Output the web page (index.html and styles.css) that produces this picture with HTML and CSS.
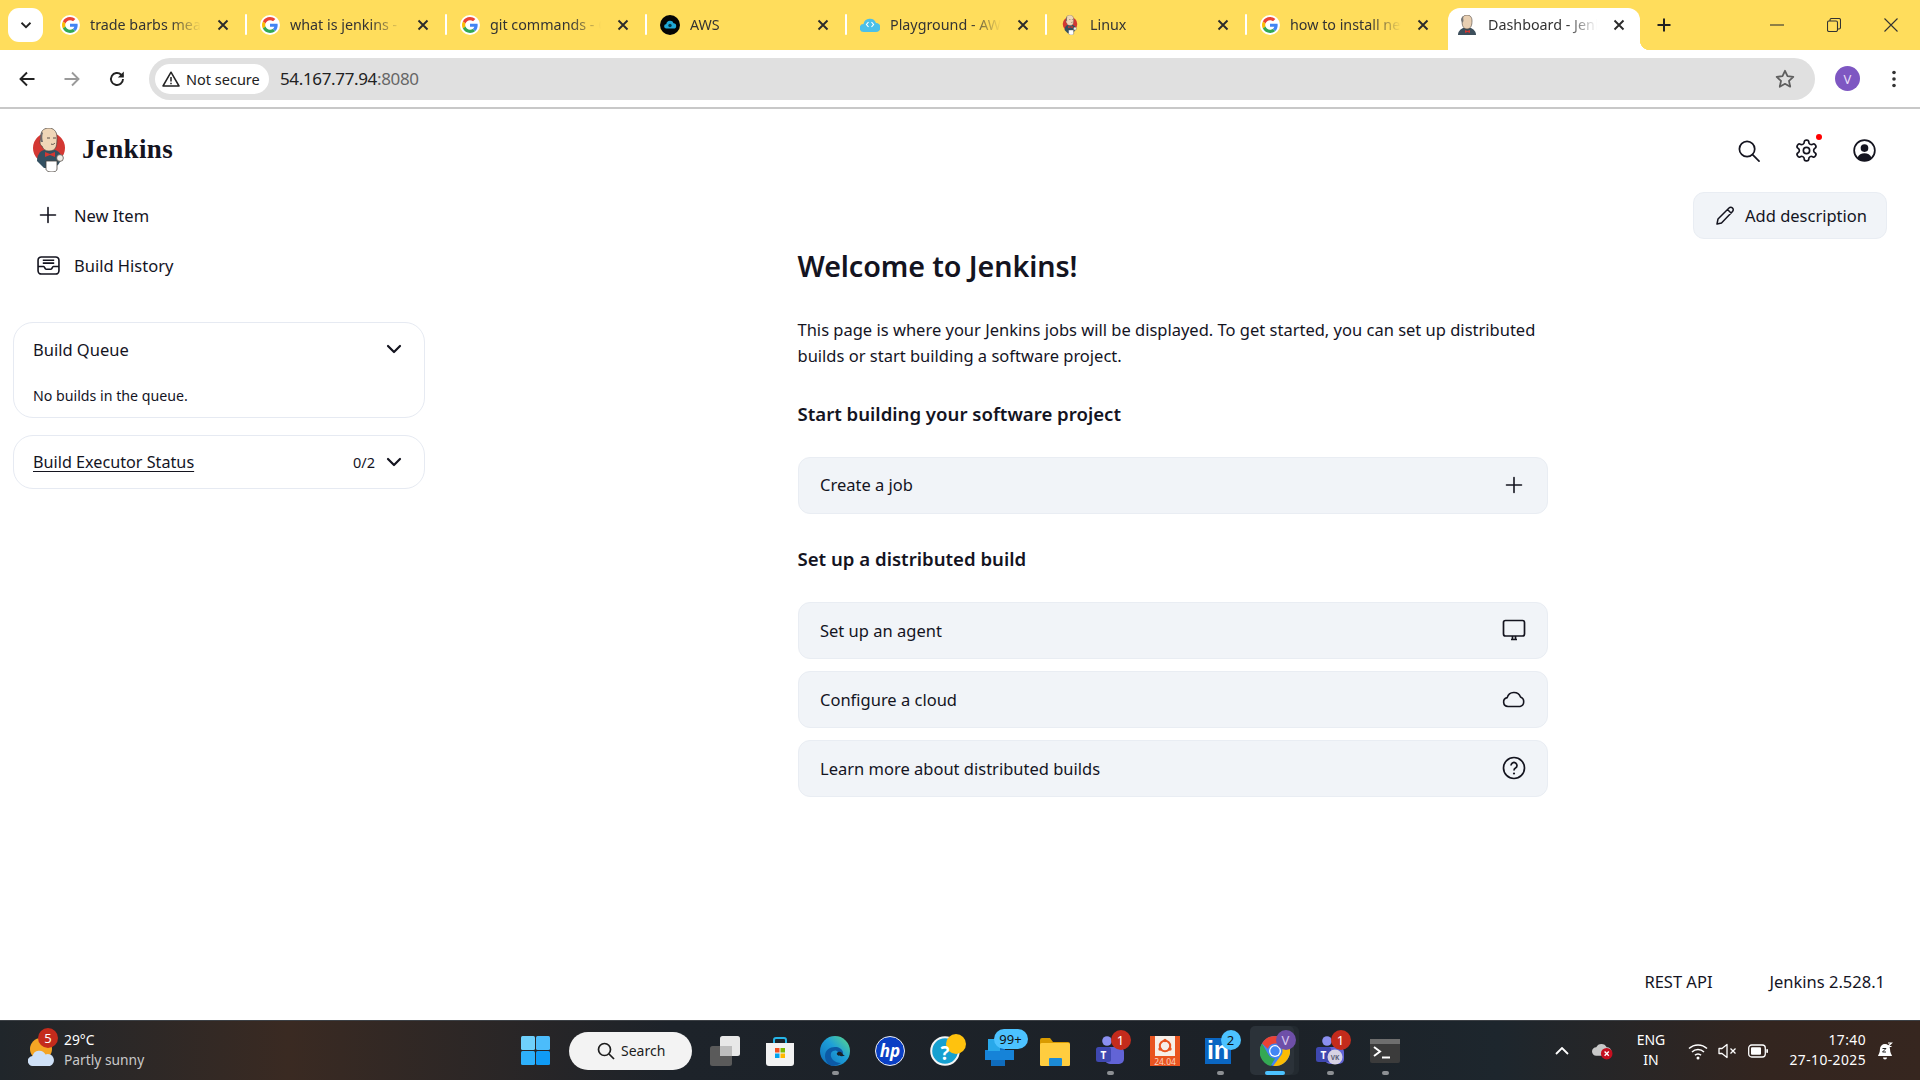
FILE: index.html
```html
<!DOCTYPE html>
<html lang="en">
<head>
<meta charset="utf-8">
<title>Dashboard - Jenkins</title>
<link rel="stylesheet" href="styles.css">
</head>
<body>
<svg class="defs" width="0" height="0" aria-hidden="true">
  <defs>
    <linearGradient id="edge" x1="0" y1="1" x2="1" y2="0">
      <stop offset="0" stop-color="#0f6cb8"/>
      <stop offset=".55" stop-color="#1e9fd8"/>
      <stop offset="1" stop-color="#5fdc85"/>
    </linearGradient>
  </defs>
  <symbol id="g" viewBox="-6 -6 60 60">
    <circle cx="24" cy="24" r="30" fill="#fff"/>
    <path fill="#EA4335" d="M24 9.5c3.54 0 6.71 1.22 9.21 3.6l6.85-6.85C35.9 2.38 30.47 0 24 0 14.62 0 6.51 5.38 2.56 13.22l7.98 6.19C12.43 13.72 17.74 9.5 24 9.5z"/>
    <path fill="#4285F4" d="M46.98 24.55c0-1.57-.15-3.09-.38-4.55H24v9.02h12.94c-.58 2.96-2.26 5.48-4.78 7.18l7.73 6c4.51-4.18 7.09-10.36 7.09-17.65z"/>
    <path fill="#FBBC05" d="M10.53 28.59c-.48-1.45-.76-2.99-.76-4.59s.27-3.14.76-4.59l-7.98-6.19C.92 16.46 0 20.12 0 24c0 3.88.92 7.54 2.56 10.78l7.97-6.19z"/>
    <path fill="#34A853" d="M24 48c6.48 0 11.93-2.13 15.89-5.81l-7.73-6c-2.15 1.45-4.92 2.3-8.16 2.3-6.26 0-11.57-4.22-13.47-9.91l-7.98 6.19C6.51 42.62 14.62 48 24 48z"/>
  </symbol>
  <symbol id="x" viewBox="0 0 12 12">
    <path d="M1.5 1.5l9 9M10.5 1.5l-9 9" stroke="#2b2b2b" stroke-width="1.9" fill="none"/>
  </symbol>
  <symbol id="butler" viewBox="0 0 32 44">
    <ellipse cx="16" cy="20" rx="16" ry="15.5" fill="#d33833"/>
    <path d="M4 33c0-6 3-10 7-11l11 0c4 1 6 4 7 9l-4 6-6 3H11z" fill="#335061"/>
    <path d="M8 7c0-5 4-7 8-7s8 3 8 9c0 3 0 7-1 10-1 3-4 4-7 4-4 0-6-2-7-5-1 0-2-2-2-4s1-3 1-3z" fill="#f0d6b7" stroke="#49423c" stroke-width=".7"/>
    <path d="M8 14c-1-3-1-8 1-10l1 1c-1 2-1 6 0 9z" fill="#6d6b6d"/>
    <path d="M14 10h3M20 10h3M18 16c2 1 3 0 4-1" stroke="#49423c" stroke-width=".9" fill="none"/>
    <path d="M12 24l5 2 5-2v5l-5-2-5 2z" fill="#d33833"/>
    <path d="M13 33h11v8c0 2-2 3-5 3s-6-1-6-3z" fill="#fff" stroke="#49423c" stroke-width=".8"/>
    <circle cx="27" cy="30" r="3.4" fill="#f0ece6" stroke="#49423c" stroke-width=".7"/>
  </symbol>
  <symbol id="chev" viewBox="0 0 16 10">
    <path d="M2 2l6 6 6-6" stroke="#14141f" stroke-width="2.2" fill="none" stroke-linecap="round" stroke-linejoin="round"/>
  </symbol>
  <symbol id="plus" viewBox="0 0 18 18">
    <path d="M9 1.5v15M1.5 9h15" stroke="#14141f" stroke-width="1.6" fill="none" stroke-linecap="round"/>
  </symbol>
  <symbol id="team" viewBox="0 0 28 30">
    <rect x="9" y="11" width="19" height="17" rx="5" fill="#6264d6"/>
    <circle cx="11" cy="5" r="4.800" fill="#8b90f0"/>
    <circle cx="22.500" cy="7" r="3.400" fill="#5f62cf"/>
    <rect x="0" y="11" width="15" height="15" rx="2.500" fill="#3f48b0"/>
    <text x="7.500" y="23" class="svg-t">T</text>
  </symbol>
</svg>

<header class="tabstrip">
  <button class="tabsearch"><svg class="ic-12" viewBox="0 0 16 10"><path d="M2 2l6 6 6-6" stroke="#222" stroke-width="2.4" fill="none"/></svg></button>
  <div class="tab"><svg class="fav"><use href="#g"/></svg><span class="tab-title">trade barbs meaning - Google Search</span><svg class="tab-x"><use href="#x"/></svg></div>
  <div class="tab"><svg class="fav"><use href="#g"/></svg><span class="tab-title">what is jenkins - Google Search</span><svg class="tab-x"><use href="#x"/></svg></div>
  <div class="tab"><svg class="fav"><use href="#g"/></svg><span class="tab-title">git commands - Google Search</span><svg class="tab-x"><use href="#x"/></svg></div>
  <div class="tab"><svg class="fav" viewBox="0 0 20 20"><circle cx="10" cy="10" r="10" fill="#050505"/><path d="M6.500 13.500a2.300 2.300 0 0 1-.2-4.600 3.800 3.800 0 0 1 7.300-.6 2.600 2.600 0 0 1 0 5.200z" fill="#1fa8d8"/><circle cx="10" cy="10.500" r="1.700" fill="#06384b"/></svg><span class="tab-title">AWS</span><svg class="tab-x"><use href="#x"/></svg></div>
  <div class="tab"><svg class="fav" viewBox="0 0 20 20"><path d="M4 17a4 4 0 0 1-.5-8 6.500 6.500 0 0 1 12.500-1 4.500 4.500 0 0 1 0 9z" fill="#4cc0e8"/><path d="M8.500 7l-2 2.500 2 2.500M11.500 7l2 2.500-2 2.500" stroke="#fff" stroke-width="1.200" fill="none"/></svg><span class="tab-title">Playground - AWS Skill Builder</span><svg class="tab-x"><use href="#x"/></svg></div>
  <div class="tab tab-linux"><svg class="fav"><use href="#butler"/></svg><span class="tab-title">Linux</span><svg class="tab-x"><use href="#x"/></svg></div>
  <div class="tab"><svg class="fav"><use href="#g"/></svg><span class="tab-title">how to install new jenkins</span><svg class="tab-x"><use href="#x"/></svg></div>
  <div class="tab tab-active"><svg class="fav fav-dash" viewBox="0 0 18 20"><path d="M0 20c0-4 3-6 5-7h8c2 1 5 3 5 7z" fill="#3d4f5c"/><path d="M4 6c0-4 2-6 5-6s5 2 5 6-1 8-5 8-5-4-5-8z" fill="#e8cfb2" stroke="#49423c" stroke-width=".6"/><path d="M3 5c0-2 1-3 2-4l.5 5-1 2z" fill="#777"/><path d="M7 15l2.500 1 2.500-1v3l-2.500-1-2.500 1z" fill="#d33833"/></svg><span class="tab-title">Dashboard - Jenkins</span><svg class="tab-x"><use href="#x"/></svg></div>
  <svg class="newtab" viewBox="0 0 14 14"><path d="M7 .5v13M.5 7h13" stroke="#222" stroke-width="2" fill="none"/></svg>
  <div class="winctl">
    <svg class="win-btn" viewBox="0 0 14 14"><path d="M0 7h14" stroke="#333" stroke-width="1.100"/></svg>
    <svg class="win-btn" viewBox="0 0 14 14"><rect x=".5" y="3" width="10" height="10.500" rx="1.500" fill="none" stroke="#333" stroke-width="1.100"/><path d="M3 3V2a1.500 1.500 0 0 1 1.500-1.500H12A1.500 1.500 0 0 1 13.500 2v7.500A1.500 1.500 0 0 1 12 11h-1.500" fill="none" stroke="#333" stroke-width="1.100"/></svg>
    <svg class="win-btn" viewBox="0 0 14 14"><path d="M.5.500l13 13M13.500.500l-13 13" stroke="#333" stroke-width="1.100"/></svg>
  </div>
</header>

<nav class="toolbar">
  <svg class="nav-ic" viewBox="0 0 18 18"><path d="M16.500 9H2.500M9 2.500L2.500 9 9 15.500" stroke="#222" stroke-width="1.900" fill="none"/></svg>
  <svg class="nav-ic" viewBox="0 0 18 18"><path d="M1.500 9h14M9 2.500L15.500 9 9 15.500" stroke="#9a9a9a" stroke-width="1.900" fill="none"/></svg>
  <svg class="nav-ic" viewBox="0 0 18 18"><path d="M15 9a6 6 0 1 1-1.800-4.300L15 6.500" stroke="#222" stroke-width="1.900" fill="none"/><path d="M15.800 1.500v6h-6z" fill="#222"/></svg>
  <div class="omnibox">
    <span class="chip"><svg class="warn" viewBox="0 0 18 16"><path d="M9 1.200L17 15H1z" fill="none" stroke="#222" stroke-width="1.500" stroke-linejoin="round"/><path d="M9 6v4.500M9 11.800v1.400" stroke="#222" stroke-width="1.500"/></svg>Not secure</span>
    <span class="url">54.167.77.94<span class="url-dim">:8080</span></span>
    <svg class="star" viewBox="0 0 20 20"><path d="M10 1.800l2.500 5.400 5.800.7-4.300 4 1.200 5.800L10 14.800l-5.200 2.900L6 11.900l-4.300-4 5.800-.7z" fill="none" stroke="#5f5f5f" stroke-width="1.800" stroke-linejoin="round"/></svg>
  </div>
  <span class="avatar">V</span>
  <svg class="kebab" viewBox="0 0 4 18"><circle cx="2" cy="2.500" r="1.800"/><circle cx="2" cy="9" r="1.800"/><circle cx="2" cy="15.500" r="1.800"/></svg>
</nav>

<div class="page">
  <div class="jk-header">
    <a class="brand"><svg class="logo"><use href="#butler"/></svg><span class="brand-name">Jenkins</span></a>
    <div class="jk-icons">
      <svg class="hd-ic" viewBox="0 0 24 24"><circle cx="10.500" cy="10.500" r="8" fill="none" stroke="#14141f" stroke-width="1.800"/><path d="M16.500 16.500L23 23" stroke="#14141f" stroke-width="1.800" stroke-linecap="round"/></svg>
      <span class="gear-wrap"><svg class="hd-ic" viewBox="1 1 22 22"><path d="M12.220 2h-.44a2 2 0 0 0-2 2v.18a2 2 0 0 1-1 1.730l-.43.250a2 2 0 0 1-2 0l-.15-.08a2 2 0 0 0-2.730.730l-.22.380a2 2 0 0 0 .730 2.730l.15.100a2 2 0 0 1 1 1.720v.510a2 2 0 0 1-1 1.740l-.15.090a2 2 0 0 0-.730 2.730l.22.380a2 2 0 0 0 2.730.730l.15-.08a2 2 0 0 1 2 0l.43.250a2 2 0 0 1 1 1.730V20a2 2 0 0 0 2 2h.44a2 2 0 0 0 2-2v-.18a2 2 0 0 1 1-1.730l.43-.25a2 2 0 0 1 2 0l.15.080a2 2 0 0 0 2.730-.730l.22-.39a2 2 0 0 0-.730-2.730l-.15-.08a2 2 0 0 1-1-1.740v-.5a2 2 0 0 1 1-1.740l.15-.09a2 2 0 0 0 .730-2.730l-.22-.38a2 2 0 0 0-2.730-.730l-.15.080a2 2 0 0 1-2 0l-.43-.25a2 2 0 0 1-1-1.730V4a2 2 0 0 0-2-2z" fill="none" stroke="#14141f" stroke-width="1.600" stroke-linejoin="round"/><circle cx="12" cy="12" r="3" fill="none" stroke="#14141f" stroke-width="1.600"/></svg><i class="red-dot"></i></span>
      <svg class="hd-ic" viewBox="0 0 24 24"><circle cx="12" cy="12" r="10.800" fill="none" stroke="#14141f" stroke-width="1.800"/><circle cx="12" cy="9.500" r="4" fill="#14141f"/><path d="M4.500 19.800c1.500-3.600 4.300-5 7.500-5s6 1.400 7.500 5A10.800 10.800 0 0 1 12 22.800a10.800 10.800 0 0 1-7.500-3z" fill="#14141f"/></svg>
    </div>
  </div>

  <div class="jk-body">
    <aside class="side">
      <a class="side-item"><span class="side-ic"><svg class="ic-18"><use href="#plus"/></svg></span>New Item</a>
      <a class="side-item"><span class="side-ic"><svg class="ic-hist" viewBox="0 0 24 20"><rect x="1" y="1" width="22" height="18" rx="3.500" fill="none" stroke="#14141f" stroke-width="1.700"/><path d="M1 11h6c1 0 1 3 2.500 3h5c1.500 0 1.500-3 2.500-3h6M6 4.500h12M6 7.500h12" fill="none" stroke="#14141f" stroke-width="1.700"/></svg></span>Build History</a>
      <section class="pane pane-queue">
        <div class="pane-head"><span>Build Queue</span><svg class="chev"><use href="#chev"/></svg></div>
        <p class="pane-text">No builds in the queue.</p>
      </section>
      <section class="pane pane-exec">
        <div class="pane-head"><a class="pane-link">Build Executor Status</a><span class="count">0/2</span><svg class="chev"><use href="#chev"/></svg></div>
      </section>
    </aside>

    <main class="welcome">
      <h1>Welcome to Jenkins!</h1>
      <p class="lead">This page is where your Jenkins jobs will be displayed. To get started, you can set up distributed builds or start building a software project.</p>
      <h2 class="h-first">Start building your software project</h2>
      <a class="action"><span>Create a job</span><svg class="ic-18"><use href="#plus"/></svg></a>
      <h2 class="h-second">Set up a distributed build</h2>
      <div class="actions">
        <a class="action"><span>Set up an agent</span><svg class="ic-24" viewBox="0 0 24 24"><rect x="1.500" y="2.500" width="21" height="15.500" rx="2" fill="none" stroke="#14141f" stroke-width="1.700"/><path d="M9 21.500h6M10.500 18v3.500M13.500 18v3.500" stroke="#14141f" stroke-width="1.700" fill="none"/></svg></a>
        <a class="action"><span>Configure a cloud</span><svg class="ic-24" viewBox="0 0 24 24"><path d="M6 19.500a4.500 4.500 0 0 1-.8-8.900 7 7 0 0 1 13.300-.6 5 5 0 0 1-.5 9.500z" fill="none" stroke="#14141f" stroke-width="1.600" stroke-linejoin="round"/></svg></a>
        <a class="action"><span>Learn more about distributed builds</span><svg class="ic-24" viewBox="0 0 24 24"><circle cx="12" cy="12" r="10.500" fill="none" stroke="#14141f" stroke-width="1.700"/><path d="M9 9.500a3 3 0 1 1 4.500 2.600c-1 .6-1.500 1.200-1.500 2.400" fill="none" stroke="#14141f" stroke-width="1.700"/><circle cx="12" cy="17.500" r="1.100" fill="#14141f"/></svg></a>
      </div>
    </main>

    <div class="top-actions">
      <a class="btn-desc"><svg class="ic-20" viewBox="0 0 20 20"><path d="M2 18l1-5L14 2c1-1 2.500-1 3.500 0s1 2.500 0 3.500L6.500 17z M12.500 3.500l4 4" fill="none" stroke="#14141f" stroke-width="1.500" stroke-linejoin="round"/></svg>Add description</a>
    </div>
  </div>

  <footer class="jk-footer"><a>REST API</a><a>Jenkins 2.528.1</a></footer>
</div>

<div class="taskbar">
  <div class="tb-left">
    <span class="weather">
      <svg class="w-ic" viewBox="0 0 28 28"><circle cx="13" cy="11" r="11" fill="#f5a524"/><path d="M5 28a5 5 0 0 1-.5-10 7 7 0 0 1 13-1.500A5.500 5.500 0 0 1 22 28z" fill="#cfe1f7"/></svg>
      <b class="badge b-weather">5</b>
    </span>
    <span class="w-text"><span>29°C</span><span class="w-sub">Partly sunny</span></span>
  </div>
  <div class="tb-center">
    <svg class="winlogo" viewBox="0 0 29 29"><rect width="14" height="14" rx="1.500" fill="#6fd0fb"/><rect x="15" width="14" height="14" rx="1.500" fill="#4cbcfb"/><rect y="15" width="14" height="14" rx="1.500" fill="#2eb0fa"/><rect x="15" y="15" width="14" height="14" rx="1.500" fill="#0f9bf5"/></svg>
    <span class="tb-search"><svg class="ic-18" viewBox="0 0 18 18"><circle cx="7.500" cy="7.500" r="6" fill="none" stroke="#1c1c1c" stroke-width="1.700"/><path d="M12 12l5 5" stroke="#1c1c1c" stroke-width="1.700"/></svg>Search</span>
    <span class="tb-app"><svg class="app" viewBox="0 0 30 30"><rect x="10" width="20" height="20" rx="2.500" fill="#e8e8e8"/><rect y="10" width="22" height="20" rx="2.500" fill="#5a5a5a" /><rect x="10" y="10" width="12" height="10" fill="#bdbdbd"/></svg></span>
    <span class="tb-app"><svg class="app" viewBox="0 0 30 30"><path d="M9 7V4a2 2 0 0 1 2-2h8a2 2 0 0 1 2 2v3" fill="none" stroke="#26b5e8" stroke-width="2"/><path d="M1 7h28v20a3 3 0 0 1-3 3H4a3 3 0 0 1-3-3z" fill="#f2f2f2"/><rect x="10" y="12" width="4.500" height="4.500" fill="#f25022"/><rect x="15.500" y="12" width="4.500" height="4.500" fill="#7fba00"/><rect x="10" y="17.500" width="4.500" height="4.500" fill="#00a4ef"/><rect x="15.500" y="17.500" width="4.500" height="4.500" fill="#ffb900"/></svg></span>
    <span class="tb-app"><svg class="app" viewBox="0 0 30 30"><circle cx="15" cy="15" r="15" fill="url(#edge)"/><path d="M5 20c0-6 5-9 10-9 4 0 7 2 8 5 .6 2-1 3-3 3-1 0-1-1-2-3-1-1.500-3-2-5-1-3 1.500-3 6 0 9 2 2 5 3 8 3-3 2-6 3-9 3-4-1-7-5-7-10z" fill="#0c5aa6"/><path d="M17 17a3 3 0 0 1 5 0c1 1.500 1.500 2.500 3 2.500-2 1-6 1-7.500-.5-.8-.6-.8-1.200-.5-2z" fill="#1c2127"/></svg><i class="dot"></i></span>
    <span class="tb-app"><span class="hp">hp</span></span>
    <span class="tb-app"><svg class="app app-help" viewBox="0 0 36 32"><circle cx="15" cy="17" r="13.800" fill="#15a0d0" stroke="#f4f4f4" stroke-width="2"/><circle cx="26" cy="10" r="10" fill="#ffc20e"/><text x="15" y="26" class="svg-q">?</text></svg></span>
    <span class="tb-app"><svg class="app" viewBox="0 0 30 30"><rect x="6" y="8" width="14" height="22" fill="#0f6cbd"/><rect x="0" y="14" width="29" height="10" fill="#1683d8"/><rect x="3" y="3" width="12" height="12" fill="#28a8ea"/></svg><b class="badge b-blue b-wide">99+</b></span>
    <span class="tb-app"><svg class="app" viewBox="0 0 30 30"><path d="M0 4a2 2 0 0 1 2-2h8l3 4h15a2 2 0 0 1 2 2v4H0z" fill="#d99b00"/><rect y="7" width="30" height="23" rx="1.500" fill="#ffcd3f"/><rect x="9" y="22" width="13" height="8" rx="1" fill="#1c8bd6"/></svg></span>
    <span class="tb-app"><svg class="app" viewBox="0 0 28 30"><use href="#team" width="28" height="30"/></svg><b class="badge b-red">1</b><i class="dot"></i></span>
    <span class="tb-app"><svg class="app" viewBox="0 0 30 30"><rect width="30" height="30" fill="#e95420"/><rect x="5" width="20" height="20" fill="#f6efe9"/><circle cx="15" cy="10" r="5.200" fill="none" stroke="#e95420" stroke-width="2"/><circle cx="15" cy="4.500" r="1.700" fill="#e95420"/><circle cx="10" cy="13" r="1.700" fill="#e95420"/><circle cx="20" cy="13" r="1.700" fill="#e95420"/><text x="15" y="28.500" class="svg-u">24.04</text></svg></span>
    <span class="tb-app"><span class="linkedin">in</span><b class="badge b-blue">2</b><i class="dot"></i></span>
    <span class="tb-app tb-active"><svg class="app" viewBox="0 0 48 48"><circle cx="24" cy="24" r="24" fill="#4285f4"/><path d="M24 0a24 24 0 0 1 20.800 12H24a12 12 0 0 0-11.500 8.500L3.200 12A24 24 0 0 1 24 0z" fill="#ea4335"/><path d="M3.200 12L13.600 30A12 12 0 0 0 24 36l-7 12A24 24 0 0 1 3.200 12z" fill="#34a853"/><path d="M44.800 12A24 24 0 0 1 21 47.800L34.400 30A12 12 0 0 0 34.400 18z" fill="#fbbc05"/><circle cx="24" cy="24" r="9.500" fill="#fff"/><circle cx="24" cy="24" r="7.500" fill="#4285f4"/></svg><b class="badge b-purple">V</b><i class="bar"></i></span>
    <span class="tb-app"><svg class="app" viewBox="0 0 28 30"><use href="#team" width="28" height="30"/><circle cx="19" cy="21" r="7.500" fill="#d6d2e4"/><text x="19" y="23.500" class="svg-vk">VK</text></svg><b class="badge b-red">1</b><i class="dot"></i></span>
    <span class="tb-app"><svg class="app" viewBox="0 0 30 30"><rect y="3" width="30" height="24" rx="2" fill="#3b3b3b"/><rect y="3" width="30" height="5" fill="#6e6e6e"/><path d="M4 11l6 4.500-6 4.500" stroke="#fff" stroke-width="2" fill="none"/><path d="M12 21.500h8" stroke="#fff" stroke-width="2"/></svg><i class="dot"></i></span>
  </div>
  <div class="tb-tray">
    <svg class="t-chev" viewBox="0 0 14 8"><path d="M1 7l6-6 6 6" stroke="#fff" stroke-width="1.800" fill="none"/></svg>
    <svg class="t-cloud" viewBox="0 0 20 18"><path d="M4 14a4 4 0 0 1 0-8 5.500 5.500 0 0 1 10 0 4 4 0 0 1 1 8z" fill="#c8c8c8"/><circle cx="14" cy="12" r="5.500" fill="#c50f1f"/><path d="M12 10l4 4M16 10l-4 4" stroke="#fff" stroke-width="1.300"/></svg>
    <span class="t-lang"><span>ENG</span><span>IN</span></span>
    <svg class="t-wifi" viewBox="0 0 20 18"><path d="M1 6.500a13 13 0 0 1 18 0M4 10a8.500 8.500 0 0 1 12 0M7 13.300a4 4 0 0 1 6 0" fill="none" stroke="#fff" stroke-width="1.500"/><circle cx="10" cy="16" r="1.500" fill="#fff"/></svg>
    <svg class="t-vol" viewBox="0 0 19 18"><path d="M1 6.500h3L9 2.500v13l-5-4H1z" fill="none" stroke="#fff" stroke-width="1.300" stroke-linejoin="round"/><path d="M12.500 6.500l5 5M17.500 6.500l-5 5" stroke="#fff" stroke-width="1.300"/></svg>
    <svg class="t-bat" viewBox="0 0 20 14"><rect x=".7" y="1" width="16.600" height="12" rx="3" fill="none" stroke="#fff" stroke-width="1.300"/><rect x="3" y="3.200" width="10" height="7.600" rx="1" fill="#fff"/><rect x="18.300" y="5" width="1.700" height="4" rx=".8" fill="#fff"/></svg>
    <span class="t-clock"><span>17:40</span><span>27-10-2025</span></span>
    <svg class="t-bell" viewBox="0 0 16 18"><path d="M8 2a5 5 0 0 1 5 5c0 4 2 6 2 7H1c0-1 2-3 2-7a5 5 0 0 1 5-5z" fill="#fff"/><path d="M6 15.500a2 2 0 0 0 4 0z" fill="#fff"/><path d="M5.500 6.500h3.500L5.500 10H9" stroke="#222" stroke-width="1" fill="none"/><path d="M11 1h3.500L11 4.500h3.500" stroke="#fff" stroke-width="1.200" fill="none"/></svg>
  </div>
</div>
</body>
</html>
```

FILE: styles.css
```css
* { box-sizing: border-box; }
html, body { margin: 0; height: 100%; }
body {
  width: 1920px;
  height: 1080px;
  overflow: hidden;
  display: flex;
  flex-direction: column;
  background: #fff;
  color: #14141f;
  font-family: "Noto Sans", "Open Sans", sans-serif;
  font-size: 16.5px;
}
.defs { position: absolute; }
a { color: inherit; text-decoration: none; }
svg { display: block; flex: none; }
.svg-t { font: 700 10px "Noto Sans", sans-serif; fill: #fff; text-anchor: middle; }
.svg-q { font: 700 19px "Noto Sans", sans-serif; fill: #fff; text-anchor: middle; }
.svg-u { font: 400 8.500px "Noto Sans", sans-serif; fill: #fbd3c1; text-anchor: middle; }
.svg-vk { font: 700 6.500px "Noto Sans", sans-serif; fill: #5b5f78; text-anchor: middle; }

/* tab strip */
.tabstrip {
  height: 50px;
  flex: none;
  display: flex;
  align-items: flex-start;
  background: #ffdd5c;
  padding-left: 8px;
}
.tabsearch {
  width: 35px;
  height: 34px;
  margin: 8px 3px 0 0;
  padding: 0;
  border: 0;
  border-radius: 11px;
  background: #fff;
  display: flex;
  align-items: center;
  justify-content: center;
}
.ic-12 { width: 12px; height: 8px; }
.tab {
  width: 200px;
  height: 42px;
  margin-top: 8px;
  padding: 0 17px 9px 14px;
  display: flex;
  align-items: center;
  position: relative;
  font-size: 14.3px;
  color: #333;
}
.tab::before {
  content: "";
  position: absolute;
  left: -1px;
  top: 6px;
  width: 2px;
  height: 21px;
  border-radius: 1px;
  background: #fff;
}
.tabsearch + .tab::before { display: none; }
.fav { width: 20px; height: 20px; margin-right: 10px; }
.tab-title {
  flex: 1;
  min-width: 0;
  white-space: nowrap;
  overflow: hidden;
  -webkit-mask-image: linear-gradient(90deg, #000 72%, transparent 100%);
  mask-image: linear-gradient(90deg, #000 72%, transparent 100%);
}
.tab-x { width: 12px; height: 12px; margin-left: 16px; }
.tab-active {
  width: 192px;
  margin-left: 2px;
  padding-left: 10px;
  padding-right: 15px;
  background: #fff;
  border-radius: 12px 12px 0 0;
}
.tab-active::before { display: none; }
.tab-active::after {
  content: "";
  position: absolute;
  right: -10px;
  bottom: 0;
  width: 10px;
  height: 10px;
  background: radial-gradient(circle at 100% 0, transparent 10px, #fff 10.500px);
}
.fav-dash { width: 18px; margin-right: 12px; }
.newtab { width: 14px; height: 14px; margin: 18px 0 0 17px; }
.winctl { margin-left: auto; display: flex; gap: 43px; padding: 18px 22px 0 0; }
.win-btn { width: 14px; height: 14px; }

/* toolbar */
.toolbar {
  height: 59px;
  flex: none;
  display: flex;
  align-items: center;
  background: #fff;
  border-bottom: 2px solid #c8c8c8;
  border-radius: 8px 8px 0 0;
  padding: 0 0 0 18px;
  position: relative;
}
.nav-ic { width: 18px; height: 18px; margin-right: 27px; }
.nav-ic + .omnibox { margin-left: -4px; }
.omnibox {
  width: 1666px;
  height: 42px;
  border-radius: 21px;
  background: #e0e0e0;
  display: flex;
  align-items: center;
  padding-left: 6px;
  font-size: 17px;
}
.chip {
  height: 30px;
  width: 114px;
  border-radius: 15px;
  background: #fff;
  display: flex;
  align-items: center;
  gap: 6px;
  padding-left: 7px;
  font-size: 14.500px;
  color: #222;
  white-space: nowrap;
}
.warn { width: 18px; height: 16px; }
.url { margin-left: 11px; color: #222; letter-spacing: -.35px; }
.url-dim { color: #666; }
.star { width: 20px; height: 20px; margin-left: auto; margin-right: 20px; }
.avatar {
  width: 25px;
  height: 25px;
  margin-left: 20px;
  border-radius: 50%;
  background: #7e57c2;
  color: #e8def8;
  font-size: 13px;
  display: flex;
  align-items: center;
  justify-content: center;
}
.kebab { width: 4px; height: 18px; margin-left: 32px; fill: #333; }

/* page */
.page { flex: 1; min-height: 0; display: flex; flex-direction: column; }
.jk-header {
  height: 82px;
  flex: none;
  display: flex;
  align-items: center;
  padding: 0 44px 0 33px;
}
.brand { display: flex; align-items: center; gap: 17px; }
.logo { width: 32px; height: 44px; }
.brand-name {
  font: 700 27px "Liberation Serif", serif;
  letter-spacing: .35px;
  color: #14141f;
  margin-bottom: 2px;
}
.jk-icons { margin-left: auto; display: flex; gap: 35px; align-items: center; }
.hd-ic { width: 23px; height: 23px; }
.gear-wrap { position: relative; display: block; }
.red-dot {
  position: absolute;
  right: -4px;
  top: -5px;
  width: 6px;
  height: 6px;
  border-radius: 50%;
  background: #f00;
}
.jk-body { flex: 1; min-height: 0; display: flex; align-items: flex-start; }

/* sidebar */
.side { width: 412px; margin-left: 13px; flex: none; }
.side-item {
  height: 50px;
  display: flex;
  align-items: center;
  padding-bottom: 2px;
  color: #14141f;
}
.side-ic {
  width: 61px;
  padding-left: 24px;
  display: flex;
}
.ic-18 { width: 18px; height: 18px; }
.ic-hist { width: 23px; height: 19px; }
.side-ic .ic-18 { margin-left: 2px; }
.pane {
  border: 1.500px solid #e6eaf2;
  border-radius: 20px;
  padding: 0 20px 0 19px;
}
.pane-queue { height: 96px; margin-top: 31px; }
.pane-exec { height: 54px; margin-top: 17px; }
.pane-head { display: flex; align-items: center; height: 52px; }
.pane-head > span:first-child, .pane-link { flex: 1; }
.pane-link { text-decoration: underline; text-underline-offset: 3px; text-decoration-thickness: 1px; font-size: 16.200px; }
.count { font-size: 14.500px; margin-left: 1px; margin-right: 11px; }
.chev { width: 16px; height: 10px; margin-right: 2px; }
.pane-text { margin: 10px 0 0; font-size: 14.200px; line-height: 22px; }

/* main */
.welcome { width: 750px; margin-left: 373px; flex: none; padding-top: 55px; }
h1 { margin: 0 0 0 -.5px; font-size: 28.700px; line-height: 40px; font-weight: 600; color: #14141f; letter-spacing: -.1px; }
.lead { margin: 31px 0 0 -.5px; line-height: 26px; }
h2 { margin: 0 0 0 -.5px; font-size: 18.600px; line-height: 26px; font-weight: 600; }
.h-first { margin-top: 32px; }
.h-second { margin-top: 32.500px; }
.action {
  height: 56.500px;
  margin-top: 30px;
  padding: 0 24px 1px 21px;
  display: flex;
  align-items: center;
  justify-content: space-between;
  background: #f1f4f8;
  border: 1px solid #e9edf3;
  border-radius: 12px;
}
.actions { margin-top: 30px; display: flex; flex-direction: column; gap: 12.500px; }
.actions .action { margin-top: 0; padding-bottom: 0; }
.ic-24 { width: 24px; height: 24px; margin-right: -3px; }
.action .ic-18 { margin-right: 0; }
.top-actions { margin-left: auto; padding: 1px 33px 0 0; }
.btn-desc {
  width: 194px;
  height: 47px;
  display: flex;
  align-items: center;
  gap: 10px;
  padding-left: 21px;
  background: #f1f4f8;
  border: 1px solid #e9edf3;
  border-radius: 11px;
  white-space: nowrap;
}
.ic-20 { width: 20px; height: 20px; }
.jk-footer {
  flex: none;
  display: flex;
  justify-content: flex-end;
  gap: 57px;
  padding: 0 35px 26px 0;
  line-height: 24px;
  font-size: 16.500px;
}

/* taskbar */
.taskbar {
  height: 60px;
  flex: none;
  display: flex;
  align-items: center;
  color: #fff;
  font-size: 14px;
  border-top: 1px solid #3c4045;
  background: linear-gradient(90deg, #20262b 0, #3a2a22 15%, #1d232a 35%, #1c2127 65%, #1d262d 78%, #33251f 92%, #36261f 100%);
}
.tb-left { width: 521px; flex: none; display: flex; align-items: center; padding-left: 28px; }
.weather { position: relative; width: 28px; height: 28px; margin-right: 8px; margin-top: 2px; }
.w-ic { width: 28px; height: 28px; }
.w-text { display: flex; flex-direction: column; line-height: 20px; font-size: 13.800px; margin-bottom: 2px; }
.w-sub { color: #c9c9c9; }
.badge {
  position: absolute;
  min-width: 20px;
  height: 20px;
  border-radius: 10px;
  display: flex;
  align-items: center;
  justify-content: center;
  color: #fff;
  font-size: 13px;
  font-weight: 400;
}
.b-weather { background: #c42b1c; right: -2px; top: -10px; }
.b-red { background: #c42b1c; }
.b-blue { background: #4cc2ff; color: #111; }
.b-wide { width: 34px; }
.b-purple { background: #6e4fa8; color: #d8c8f0; }
.tb-center { display: flex; align-items: center; flex: none; }
.winlogo { width: 29px; height: 29px; margin-right: 19px; }
.tb-search {
  width: 123px;
  height: 38px;
  margin-right: 5.500px;
  border-radius: 19px;
  background: #f3f3f3;
  color: #1c1c1c;
  display: flex;
  align-items: center;
  gap: 6px;
  padding-left: 28px;
  font-size: 14px;
}
.tb-app {
  width: 55px;
  height: 60px;
  display: flex;
  align-items: center;
  justify-content: center;
  position: relative;
}
.app { width: 30px; height: 30px; }
.app-help { width: 36px; height: 32px; margin-left: 6px; margin-top: -2px; }
.tb-app .badge { right: 7px; top: 9px; }
.tb-app .b-wide { right: 0; top: 8px; border-radius: 11px; }
.dot {
  position: absolute;
  left: 24px;
  bottom: 6px;
  width: 7px;
  height: 4px;
  border-radius: 2px;
  background: #8d9094;
}
.bar {
  position: absolute;
  left: 17.500px;
  bottom: 6px;
  width: 20px;
  height: 4px;
  border-radius: 2px;
  background: #4cc2ff;
}
.tb-active::before {
  content: "";
  position: absolute;
  left: 2.500px;
  top: 5px;
  width: 44px;
  height: 49px;
  border-radius: 5px;
  background: #2b3239;
  box-shadow: 5px 0 0 #232a30;
}
.tb-active .app, .tb-active .badge, .tb-active .bar { z-index: 1; }
.hp {
  width: 30px;
  height: 30px;
  border-radius: 50%;
  background: #0a3fc4;
  border: 1.500px solid #f1f1f1;
  color: #fff;
  display: flex;
  align-items: center;
  justify-content: center;
  font-size: 17px;
  font-style: italic;
  font-weight: 700;
}
.linkedin {
  width: 26px;
  height: 26px;
  margin-left: -4px;
  background: #0a66c2;
  color: #fff;
  display: flex;
  align-items: center;
  justify-content: center;
  font-size: 25px;
  line-height: 1;
  font-weight: 700;
  font-family: "Liberation Sans", sans-serif;
}
.tb-tray { margin-left: auto; display: flex; align-items: center; padding-right: 27px; flex: none; }
.t-chev { width: 14px; height: 8px; }
.t-cloud { width: 21px; height: 19px; margin-left: 23px; }
.t-lang { width: 36px; margin-left: 20px; margin-bottom: 2px; display: flex; flex-direction: column; align-items: center; line-height: 20px; font-size: 14px; }
.t-wifi { width: 20px; height: 18px; margin-left: 19px; }
.t-vol { width: 19px; height: 18px; margin-left: 10px; }
.t-bat { width: 20px; height: 14px; margin-left: 11px; }
.t-clock { width: 84px; margin-left: 14px; margin-bottom: 2px; display: flex; flex-direction: column; align-items: flex-end; line-height: 20px; font-size: 13.800px; letter-spacing: .45px; white-space: nowrap; }
.t-bell { width: 16px; height: 18px; margin-left: 11px; }
```
